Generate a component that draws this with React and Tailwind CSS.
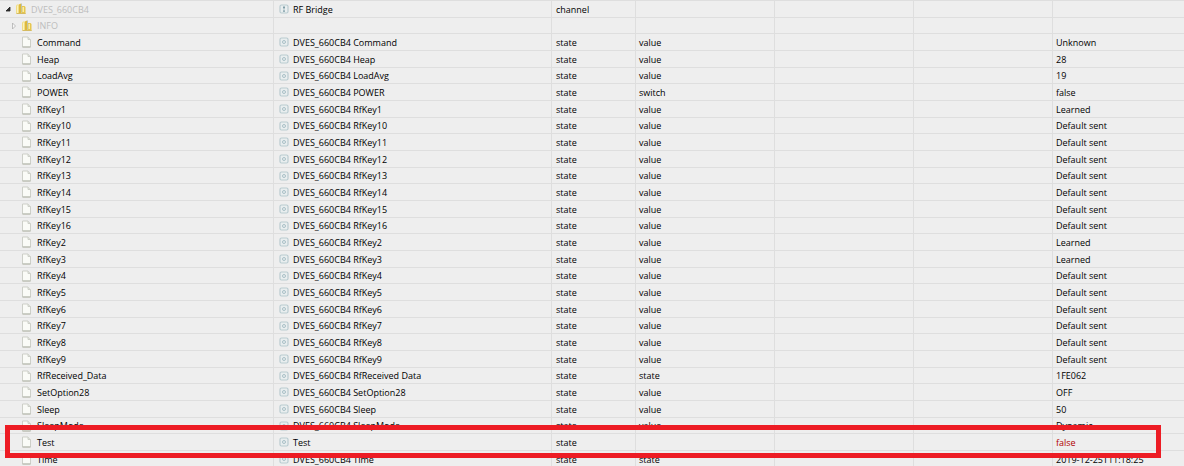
import { useState } from 'react'

const DEVICE = 'DVES_660CB4'

const states = [
  { id: 'Command', role: 'value', value: 'Unknown' },
  { id: 'Heap', role: 'value', value: '28' },
  { id: 'LoadAvg', role: 'value', value: '19' },
  { id: 'POWER', role: 'switch', value: 'false' },
  { id: 'RfKey1', role: 'value', value: 'Learned' },
  { id: 'RfKey10', role: 'value', value: 'Default sent' },
  { id: 'RfKey11', role: 'value', value: 'Default sent' },
  { id: 'RfKey12', role: 'value', value: 'Default sent' },
  { id: 'RfKey13', role: 'value', value: 'Default sent' },
  { id: 'RfKey14', role: 'value', value: 'Default sent' },
  { id: 'RfKey15', role: 'value', value: 'Default sent' },
  { id: 'RfKey16', role: 'value', value: 'Default sent' },
  { id: 'RfKey2', role: 'value', value: 'Learned' },
  { id: 'RfKey3', role: 'value', value: 'Learned' },
  { id: 'RfKey4', role: 'value', value: 'Default sent' },
  { id: 'RfKey5', role: 'value', value: 'Default sent' },
  { id: 'RfKey6', role: 'value', value: 'Default sent' },
  { id: 'RfKey7', role: 'value', value: 'Default sent' },
  { id: 'RfKey8', role: 'value', value: 'Default sent' },
  { id: 'RfKey9', role: 'value', value: 'Default sent' },
  { id: 'RfReceived_Data', name: `${DEVICE} RfReceived Data`, role: 'state', value: '1FE062' },
  { id: 'SetOption28', role: 'value', value: 'OFF' },
  { id: 'Sleep', role: 'value', value: '50' },
  { id: 'SleepMode', role: 'value', value: 'Dynamic' },
  { id: 'Test', name: 'Test', role: '', value: 'false', marked: true },
  { id: 'Time', role: 'state', value: '2019-12-25T11:18:25' },
]

function FolderIcon() {
  return (
    <svg className="h-3 w-3 shrink-0" viewBox="0 0 12 12" aria-hidden="true">
      <path d="M1 2.5 2 1.500h3V10L4 10.500H1z" fill="#f0dc86" />
      <path d="M2 2.500h1V10H2z" fill="#fbf3bd" />
      <path d="M4 1.500 6 .5v9.500l-2 1z" fill="#dfb93c" />
      <path d="M6 .5h1V9.500L6 10z" fill="#b9c3b0" />
      <path d="M7 3h2.500l1 1V11H6.500z" fill="#e6c64f" />
      <path d="M7.500 4H9v5H7.500z" fill="#f9eda4" />
      <path d="M1.500 10h9v1h-9z" fill="#d5bb62" />
    </svg>
  )
}

function FileIcon() {
  return (
    <svg className="h-3 w-3 shrink-0" viewBox="0 0 12 12" aria-hidden="true">
      <path d="M1.500 1h5.500L9.500 3.500v7.500h-8z" fill="#fafbf7" stroke="#cdcfc8" />
      <path d="M7 1v2.500h2.500" fill="#e3e6df" stroke="#cdcfc8" />
      <path d="M1.500 11h8" stroke="#b3b6aa" />
    </svg>
  )
}

function StateIcon() {
  return (
    <svg className="h-[10px] w-[10px] shrink-0" viewBox="0 0 10 10" fill="none" aria-hidden="true">
      <rect x="1" y="1" width="8" height="8" rx="1.500" fill="#e9eeef" stroke="#b9cbd0" strokeWidth="1.200" />
      <circle cx="5" cy="5" r="1.500" stroke="#a8bfc6" />
    </svg>
  )
}

function ChannelIcon() {
  return (
    <svg className="h-[10px] w-[10px] shrink-0" viewBox="0 0 10 10" fill="none" aria-hidden="true">
      <rect x="1" y="1" width="8" height="8" rx="1.500" fill="#e9eeef" stroke="#b9cbd0" strokeWidth="1.200" />
      <path d="M5 2v3.500M5 6.500V8M4 3.500h2M4 7h2" stroke="#7f9ca6" />
    </svg>
  )
}

function Expander({ open, label, onClick }) {
  return (
    <button
      type="button"
      aria-label={label}
      aria-expanded={open}
      onClick={onClick}
      className="flex h-3 w-2 shrink-0 items-center justify-center"
    >
      <svg className="h-2 w-2" viewBox="0 0 8 8" aria-hidden="true">
        {open ? (
          <path d="M6 2v4H2z" fill="#333" stroke="#222" strokeWidth=".8" />
        ) : (
          <path d="M2.500 1v6l3-3z" fill="#f8f8f8" stroke="#b0b0b0" strokeWidth=".8" />
        )}
      </svg>
    </button>
  )
}

function FolderLabel({ label, open, onToggle }) {
  return (
    <div className="flex items-center gap-1 text-[#bdbdbd]">
      <div className="flex gap-[3px]">
        <Expander open={open} label={`Toggle ${label}`} onClick={onToggle} />
        <FolderIcon />
      </div>
      <span>{label}</span>
    </div>
  )
}

function Cell({ children, className = 'pl-[3px]' }) {
  return (
    <td className={`border-t border-r border-[#dedede] p-0 last:border-r-0 ${className}`}>
      {children}
    </td>
  )
}

// Row heights repeat 17 / 16 / 17
function Row({ tree, treeClass, icon, name, type, role, value, valueClass = 'pl-[3px]' }) {
  return (
    <tr className="h-[17px] nth-[3n+2]:h-4">
      <Cell className={treeClass}>{tree}</Cell>
      <Cell className="pl-[5px]">
        {name ? (
          <div className="flex items-center gap-1">
            {icon}
            <span>{name}</span>
          </div>
        ) : null}
      </Cell>
      <Cell className="pl-1">{type}</Cell>
      <Cell>{role}</Cell>
      <Cell />
      <Cell />
      <Cell className={valueClass}>{value}</Cell>
    </tr>
  )
}

export default function App() {
  const [open, setOpen] = useState(true)
  const [infoOpen, setInfoOpen] = useState(false)

  return (
    <main className="h-screen overflow-hidden bg-[#eeeeee] font-['Open_Sans','Noto_Sans',sans-serif] text-[9px] leading-[15px] text-black">
      <div className="relative">
        <table className="w-full table-fixed border-separate border-spacing-0 whitespace-nowrap">
          <colgroup>
            <col className="w-[274px]" />
            <col className="w-[278px]" />
            <col className="w-[84px]" />
            <col className="w-[139px]" />
            <col className="w-[139px]" />
            <col className="w-[139px]" />
            <col />
          </colgroup>
          <tbody>
            <Row
              tree={<FolderLabel label={DEVICE} open={open} onToggle={() => setOpen(!open)} />}
              treeClass="pl-1"
              icon={<ChannelIcon />}
              name="RF Bridge"
              type="channel"
            />
            {open ? (
              <>
                <Row
                  tree={<FolderLabel label="INFO" open={infoOpen} onToggle={() => setInfoOpen(!infoOpen)} />}
                  treeClass="pl-[10px]"
                />
                {states.map((state) => (
                  <Row
                    key={state.id}
                    tree={
                      <div className="flex items-center gap-1">
                        <FileIcon />
                        <span>{state.id}</span>
                      </div>
                    }
                    treeClass="pl-[21px]"
                    icon={<StateIcon />}
                    name={state.name ?? `${DEVICE} ${state.id}`}
                    type="state"
                    role={state.role}
                    value={state.value}
                    valueClass={state.marked ? 'pl-[3px] text-[#b00000]' : 'pl-[3px]'}
                  />
                ))}
              </>
            ) : null}
          </tbody>
        </table>
        {open ? (
          <div className="pointer-events-none absolute right-[23px] bottom-[9px] left-[5px] h-[33px] border-[5px] border-[#ed1c24]" />
        ) : null}
      </div>
    </main>
  )
}
